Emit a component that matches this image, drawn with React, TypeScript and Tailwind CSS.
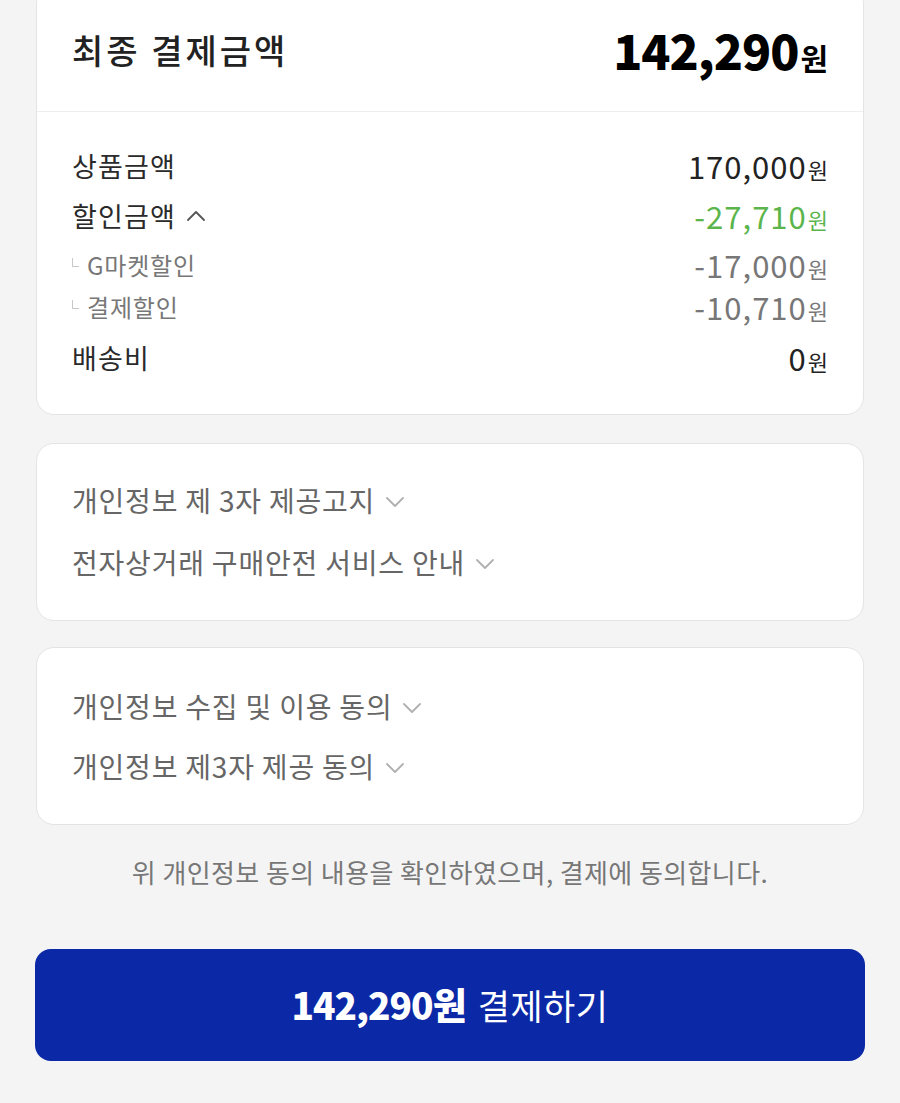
const FONT = "font-['Noto_Sans_CJK_KR','Noto_Sans',sans-serif]";

function ChevronDown() {
  return (
    <svg className="ml-[10px] mt-[4px] h-[12px] w-[20px]" viewBox="0 0 20 12" fill="none">
      <path d="M2 2l8 8 8-8" stroke="#b0b0b0" strokeWidth={1.8} strokeLinecap="round" strokeLinejoin="round" />
    </svg>
  );
}

function ChevronUp() {
  return (
    <svg className="ml-[10px] h-[12px] w-[20px]" viewBox="0 0 20 12" fill="none">
      <path d="M2 10l8-8 8 8" stroke="#555555" strokeWidth={1.8} strokeLinecap="round" strokeLinejoin="round" />
    </svg>
  );
}

function Won({ value, className }: { value: string; className: string }) {
  return (
    <span className={`flex items-baseline ${className}`}>
      <span className="text-[31px] tracking-[1px]">{value}</span>
      <span className="ml-[1px] text-[22px]">원</span>
    </span>
  );
}

function SubRow({ label, value, className }: { label: string; value: string; className?: string }) {
  return (
    <div className={`flex h-[42px] items-center justify-between ${className ?? ""}`}>
      <div className="flex items-center">
        <span className="mr-[8px] mt-[-6px] h-[9px] w-[7px] border-b border-l border-[#c8c8c8]" />
        <span className="text-[24px] tracking-[0.8px] text-[#777777]">{label}</span>
      </div>
      <Won value={value} className="text-[#777777]" />
    </div>
  );
}

function LinkRow({ label, h }: { label: string; h: string }) {
  return (
    <div className={`flex items-center ${h}`}>
      <span className="text-[28px] tracking-[0.8px] text-[#666666]">{label}</span>
      <ChevronDown />
    </div>
  );
}

export default function App() {
  return (
    <div className={`min-h-[1103px] overflow-hidden bg-[#f4f4f4] px-[36px] ${FONT}`}>
      {/* summary */}
      <div className="mt-[-14px] rounded-[18px] border border-[#e4e4e4] bg-white">
        <div className="flex h-[125px] items-center justify-between border-b border-[#eeeeee] px-[35px]">
          <span className="text-[34px] font-medium tracking-[3px] text-[#222222]">최종 결제금액</span>
          <span className="flex items-baseline text-black">
            <span className="text-[48px] font-black tracking-[-1px]">142,290</span>
            <span className="ml-[2px] text-[30px] font-bold">원</span>
          </span>
        </div>
        <div className="px-[35px] pb-[31px] pt-[29px]">
          <div className="flex h-[50px] items-center justify-between">
            <span className="text-[27px] tracking-[1.2px] text-[#2a2a2a]">상품금액</span>
            <Won value="170,000" className="text-[#222222]" />
          </div>
          <div className="flex h-[50px] items-center justify-between">
            <div className="flex items-center">
              <span className="text-[27px] tracking-[1.2px] text-[#2a2a2a]">할인금액</span>
              <ChevronUp />
            </div>
            <Won value="-27,710" className="text-[#5bb54c]" />
          </div>
          <SubRow label="G마켓할인" value="-17,000" className="mt-[3px]" />
          <SubRow label="결제할인" value="-10,710" />
          <div className="mt-[5px] flex h-[50px] items-center justify-between">
            <span className="text-[27px] tracking-[1.2px] text-[#2a2a2a]">배송비</span>
            <Won value="0" className="text-[#222222]" />
          </div>
        </div>
      </div>

      {/* notices */}
      <div className="mt-[28px] rounded-[18px] border border-[#e4e4e4] bg-white px-[35px] pb-[27px] pt-[25px]">
        <LinkRow label="개인정보 제 3자 제공고지" h="h-[62px]" />
        <LinkRow label="전자상거래 구매안전 서비스 안내" h="h-[62px]" />
      </div>

      {/* agreements */}
      <div className="mt-[26px] rounded-[18px] border border-[#e4e4e4] bg-white px-[35px] pb-[28px] pt-[28px]">
        <LinkRow label="개인정보 수집 및 이용 동의" h="h-[60px]" />
        <LinkRow label="개인정보 제3자 제공 동의" h="h-[60px]" />
      </div>

      <p className="mt-[29px] h-[36px] text-center text-[26px] leading-[36px] tracking-[0.4px] text-[#777777]">
        위 개인정보 동의 내용을 확인하였으며, 결제에 동의합니다.
      </p>

      <button className="mx-[-1px] mt-[59px] flex h-[112px] w-[830px] items-center justify-center rounded-[16px] bg-[#0b28a6] text-white">
        <span className="text-[37px] font-black tracking-[-1px]">142,290원</span>
        <span className="ml-[12px] text-[35px] tracking-[0.5px]">결제하기</span>
      </button>
    </div>
  );
}
